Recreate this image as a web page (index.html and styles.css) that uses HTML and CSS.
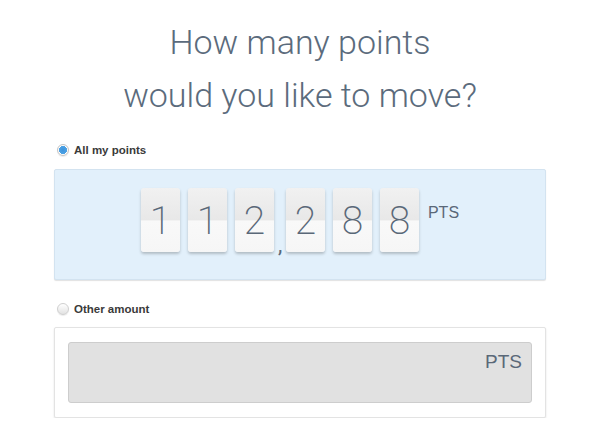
FILE: index.html
```html
<!DOCTYPE html>
<html lang="en">
<head>
    <meta charset="UTF-8">
    <meta name="viewport" content="width=device-width, initial-scale=1.0">
    <title>Move points</title>
    <link rel="stylesheet" href="styles.css">
</head>
<body>
    <div class="page">
        <h1 class="title">How many points<br>would you like to move?</h1>

        <label class="option">
            <span class="radio checked"></span>
            <span class="option-label">All my points</span>
        </label>
        <div class="panel panel-active">
            <div class="counter">
                <span class="tile">1</span>
                <span class="tile">1</span>
                <span class="tile">2</span>
                <span class="comma">,</span>
                <span class="tile">2</span>
                <span class="tile">8</span>
                <span class="tile">8</span>
                <span class="unit">PTS</span>
            </div>
        </div>

        <label class="option option-other">
            <span class="radio"></span>
            <span class="option-label">Other amount</span>
        </label>
        <div class="panel panel-plain">
            <div class="amount-input">
                <span class="amount-unit">PTS</span>
            </div>
        </div>
    </div>
</body>
</html>
```

FILE: styles.css
```css
body {
    margin: 0;
    padding: 0;
    background-color: #ffffff;
    font-family: "Liberation Sans", Arial, sans-serif;
    color: #333;
}
.page {
    width: 492px;
    margin: 0 auto;
}
.title {
    margin: 16px 0 0;
    font-family: Roboto, "Liberation Sans", sans-serif;
    font-weight: 300;
    font-size: 34px;
    line-height: 53px;
    color: #5b6b7c;
    text-align: center;
}
.option {
    display: flex;
    align-items: center;
    gap: 5px;
    height: 12px;
    margin: 22px 0 13px 3px;
}
.option-other {
    margin-top: 23px;
    margin-bottom: 12px;
}
.radio {
    box-sizing: border-box;
    width: 12px;
    height: 12px;
    border-radius: 50%;
    border: 1px solid #cfcfcf;
    background: linear-gradient(#ffffff, #e2e2e2);
    box-shadow: 0 1px 1px rgba(0, 0, 0, 0.08);
}
.radio.checked {
    border-color: #c4c4c4;
    background: radial-gradient(circle, #3b93dc 0, #4ea2e4 3.8px, #ffffff 4.3px, #f2f2f2 6px);
}
.option-label {
    font-size: 11.5px;
    font-weight: bold;
    color: #3a3a3a;
}
.panel {
    box-sizing: border-box;
    border-radius: 2px;
}
.panel-active {
    height: 111px;
    padding-top: 18px;
    background-color: #e2f0fb;
    border: 1px solid #d3e3f0;
    box-shadow: 0 1px 1px rgba(0, 0, 0, 0.12);
}
.counter {
    display: flex;
    justify-content: center;
    align-items: flex-start;
}
.tile {
    width: 39px;
    height: 64px;
    margin-right: 8px;
    border-radius: 3px;
    background: linear-gradient(#f1f1f1 0, #e8e8e8 50%, #d9d9d9 50%, #f9f9f9 51%, #f6f6f6 100%);
    box-shadow: 0 2px 3px rgba(0, 0, 0, 0.22);
    font-family: Roboto, "Liberation Sans", sans-serif;
    font-weight: 200;
    font-size: 39px;
    line-height: 66px;
    text-align: center;
    color: #5a6878;
}
.comma {
    width: 0;
    margin: 46px 8px 0 -4px;
    font-family: Roboto, "Liberation Sans", sans-serif;
    font-size: 22px;
    line-height: 22px;
    color: #5a6878;
}
.unit {
    margin: 17px 0 0 1px;
    font-size: 16px;
    line-height: 16px;
    color: #5a6878;
}
.panel-plain {
    height: 91px;
    padding: 14px 13px;
    background-color: #ffffff;
    border: 1px solid #e3e3e3;
    box-shadow: 0 1px 2px rgba(0, 0, 0, 0.12);
}
.amount-input {
    box-sizing: border-box;
    height: 61px;
    padding: 9px 9px 0 0;
    background-color: #e1e1e1;
    border: 1px solid #cdcdcd;
    border-radius: 3px;
    text-align: right;
}
.amount-unit {
    font-size: 19px;
    line-height: 20px;
    color: #5a6878;
}
```
